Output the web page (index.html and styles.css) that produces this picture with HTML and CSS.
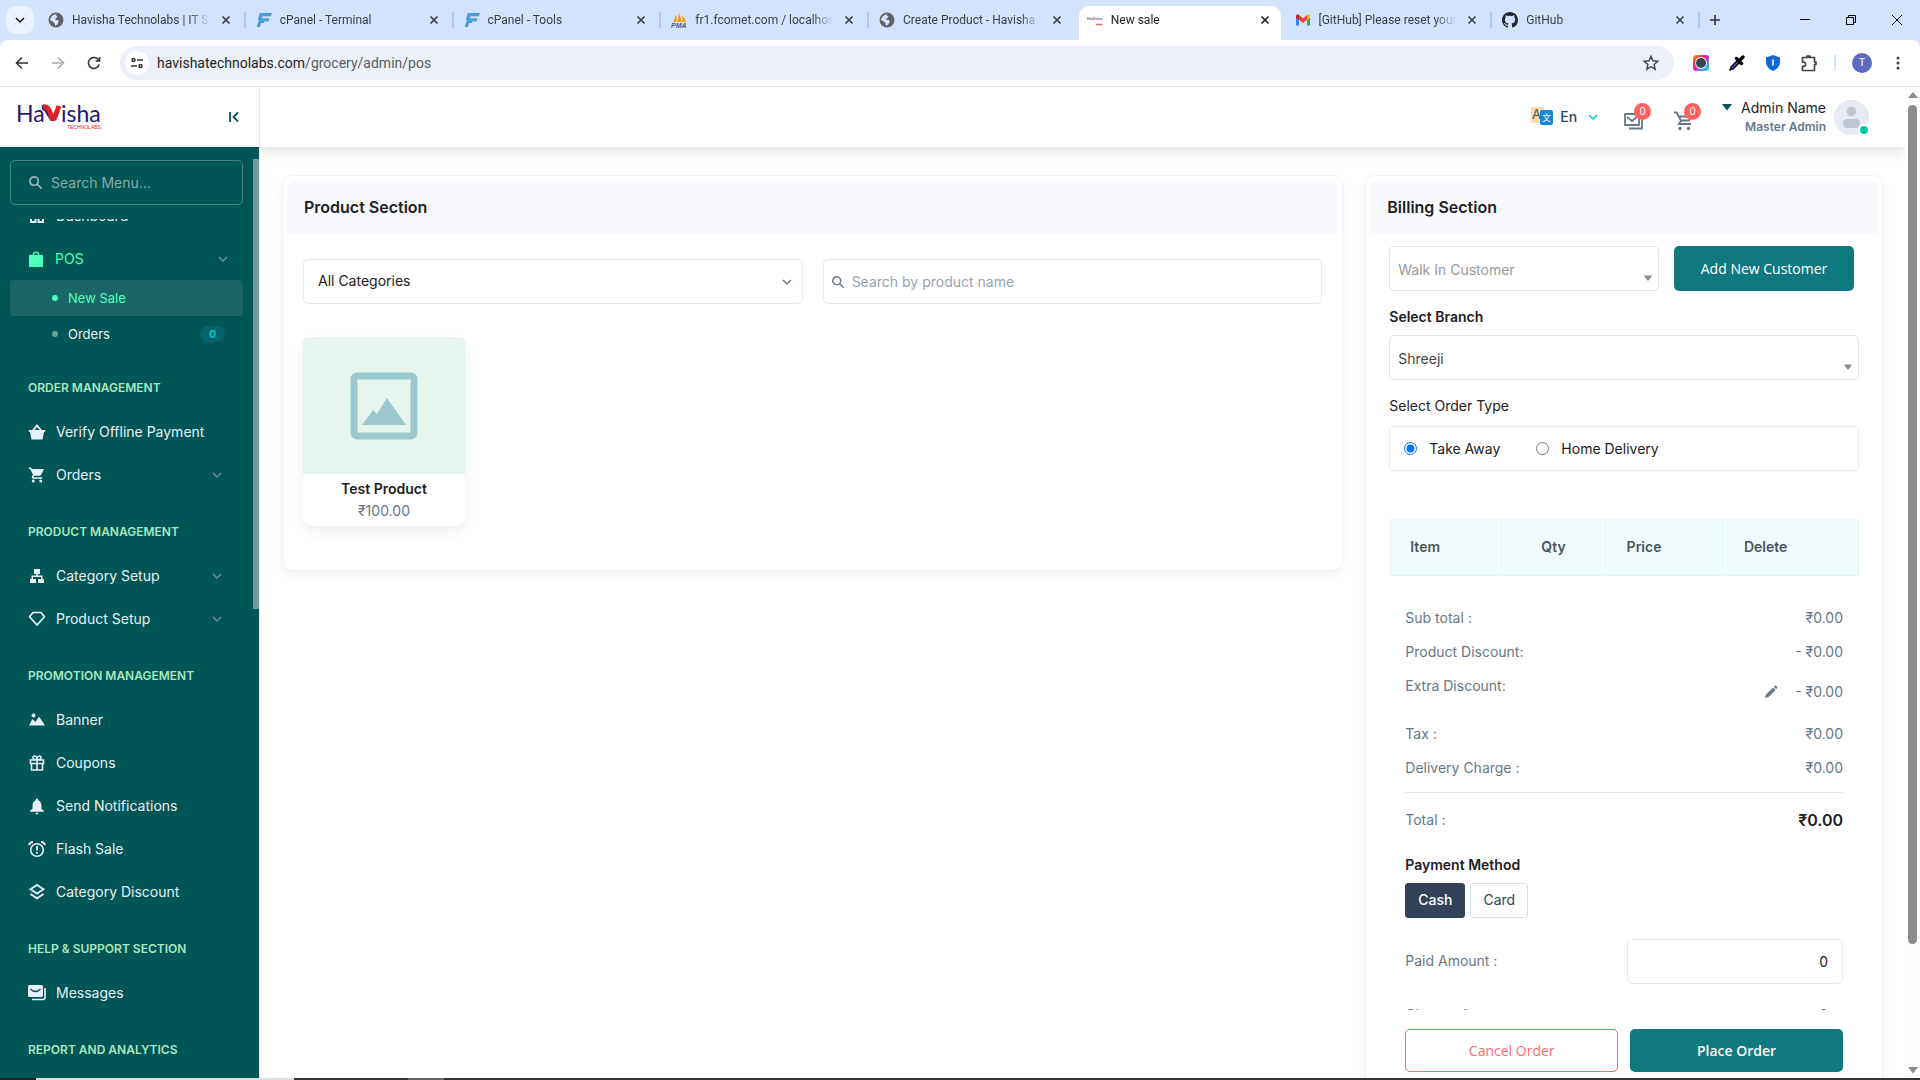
FILE: index.html
```html
<!DOCTYPE html>
<html lang="en">
<head>
<meta charset="utf-8">
<meta name="viewport" content="width=device-width, initial-scale=1">
<title>New sale</title>
<link rel="stylesheet" href="styles.css">
</head>
<body>
<svg class="defs" aria-hidden="true">
  <symbol id="close" viewBox="0 0 16 16"><path d="M4.500 4.500l7 7M11.500 4.500l-7 7" fill="none" stroke="currentColor" stroke-width="1.700"/></symbol>
  <symbol id="chev" viewBox="0 0 12 12"><path d="M2 4l4 4 4-4" fill="none" stroke="currentColor" stroke-width="1.500"/></symbol>
  <symbol id="tri" viewBox="0 0 12 12"><path d="M1 3h10L6 9.500z" fill="currentColor"/></symbol>
  <symbol id="search" viewBox="0 0 16 16"><path d="M10 10l4.500 4.500M11 6.500a4.500 4.500 0 1 1-9 0a4.500 4.500 0 0 1 9 0z" fill="none" stroke="currentColor" stroke-width="1.700"/></symbol>
  <symbol id="globe" viewBox="0 0 16 16"><circle cx="8" cy="8" r="7.500" fill="#5f6368"/><path d="M3 5.500c1-2 3-3.500 5.500-3.300-1 1-.5 1.800.8 2 .4 1.300-.8 1.600-1.800 2.300-.5 1 .3 1.500 1.700 1.600 1.300.2 1.600 1.300 1.200 2.300-.8 1.800-2 3-3.500 3.300.3-1.500-.2-2.400-1-3.200C4.700 9.300 3.600 8.600 2 8.200c0-1 .4-2 1-2.700z" fill="#d3e3fd"/></symbol>
  <symbol id="cpanel" viewBox="0 0 16 16"><path d="M4 1h12l-1.200 3.300H6.300L5.800 6.200h7.700l-1 3.200H8.200l-.5 1.600H5L3.800 15H.8L3 7.500H1.500z" fill="#4a9edb"/></symbol>
  <symbol id="bin" viewBox="0 0 24 24"><path d="M7 18a2 2 0 1 0 0 4 2 2 0 0 0 0-4zM1 2v2h2l3.600 7.590-1.350 2.450C4.500 15.400 5.500 17 7 17h12v-2H7.420l-.22-.37.900-1.630h7.450c.75 0 1.410-.41 1.750-1.030l3.580-6.490A1 1 0 0 0 20 4H5.210l-.94-2zM17 18a2 2 0 1 0 0 4 2 2 0 0 0 0-4z" fill="currentColor"/></symbol>
</svg>

<div class="browser">
  <div class="tabstrip">
    <button class="tab-search" aria-label="Search tabs"><svg width="12" height="12"><use href="#chev" stroke-width="2"/></svg></button>
    <div class="tabs">
      <div class="tab"><svg class="fav"><use href="#globe"/></svg><span class="tab-title">Havisha Technolabs | IT Solutions</span><button class="tab-close" aria-label="Close"><svg><use href="#close"/></svg></button></div>
      <div class="tab"><svg class="fav"><use href="#cpanel"/></svg><span class="tab-title">cPanel - Terminal</span><button class="tab-close" aria-label="Close"><svg><use href="#close"/></svg></button></div>
      <div class="tab"><svg class="fav"><use href="#cpanel"/></svg><span class="tab-title">cPanel - Tools</span><button class="tab-close" aria-label="Close"><svg><use href="#close"/></svg></button></div>
      <div class="tab"><svg class="fav" viewBox="0 0 16 16"><path d="M2 10Q4.500 6 5 2q1 4 .5 8zM6.500 10Q8 5 7.500 1q3 4 2.500 9zM10.800 10Q12 7 11 3q3.500 4 4 7z" fill="#f89c0e"/><text x="0" y="16" class="pma">PMA</text></svg><span class="tab-title">fr1.fcomet.com / localhost / grocery</span><button class="tab-close" aria-label="Close"><svg><use href="#close"/></svg></button></div>
      <div class="tab no-sep"><svg class="fav"><use href="#globe"/></svg><span class="tab-title">Create Product - Havisha Technolabs</span><button class="tab-close" aria-label="Close"><svg><use href="#close"/></svg></button></div>
      <div class="tab active"><svg class="fav" viewBox="0 0 16 16"><text x="0" y="8" class="fav-ha">Ha<tspan class="fav-v">V</tspan>isha</text><path d="M9 12.500h6" stroke="#e66" stroke-width="1.500"/></svg><span class="tab-title">New sale</span><button class="tab-close" aria-label="Close"><svg><use href="#close"/></svg></button></div>
      <div class="tab"><svg class="fav" viewBox="0 0 16 16"><path d="M1 3v10.500h3V7z" fill="#4285f4"/><path d="M15 3v10.500h-3V7z" fill="#34a853"/><path d="M1 3.500Q2.500 1.500 4 3v5L1 6z" fill="#c5221f"/><path d="M15 3.500Q13.500 1.500 12 3v5l3-2z" fill="#fbbc04"/><path d="M4 3l4 3.200L12 3v4.800L8 11 4 7.800z" fill="#ea4335"/></svg><span class="tab-title">[GitHub] Please reset your password</span><button class="tab-close" aria-label="Close"><svg><use href="#close"/></svg></button></div>
      <div class="tab"><svg class="fav" viewBox="0 0 16 16"><path fill="#24292f" d="M8 0C3.580 0 0 3.580 0 8c0 3.540 2.290 6.530 5.470 7.590.4.070.55-.17.55-.38 0-.19-.01-.82-.01-1.490-2.010.37-2.530-.49-2.690-.94-.09-.23-.48-.94-.82-1.130-.28-.15-.68-.52-.01-.53.630-.01 1.080.580 1.230.820.720 1.210 1.870.870 2.330.660.070-.52.280-.87.510-1.070-1.780-.2-3.640-.89-3.640-3.950 0-.87.310-1.590.820-2.150-.08-.2-.36-1.020.080-2.120 0 0 .67-.21 2.200.820a7.700 7.700 0 0 1 4 0c1.530-1.040 2.200-.82 2.200-.82.440 1.100.160 1.920.080 2.120.510.560.820 1.270.820 2.150 0 3.070-1.870 3.750-3.650 3.950.290.250.540.730.540 1.480 0 1.070-.01 1.930-.01 2.200 0 .21.150.460.550.380A8 8 0 0 0 16 8c0-4.420-3.580-8-8-8z"/></svg><span class="tab-title">GitHub</span><button class="tab-close" aria-label="Close"><svg><use href="#close"/></svg></button></div>
    </div>
    <button class="new-tab" aria-label="New tab"><svg width="14" height="14" viewBox="0 0 14 14"><path d="M7 2v10M2 7h10" stroke="#333" stroke-width="1.600"/></svg></button>
    <div class="win-buttons">
      <button aria-label="Minimize"><svg width="12" height="12" viewBox="0 0 12 12"><path d="M1 5.500h10" stroke="#000"/></svg></button>
      <button aria-label="Restore"><svg width="12" height="12" viewBox="0 0 12 12"><path d="M1.500 3.500h7v7h-7zM3.500 3V1.500h7v7H9" fill="none" stroke="#000"/></svg></button>
      <button aria-label="Close window"><svg width="12" height="12" viewBox="0 0 12 12"><path d="M1 1l10 10M11 1L1 11" stroke="#000"/></svg></button>
    </div>
  </div>

  <div class="toolbar">
    <button class="nav-btn" aria-label="Back"><svg width="16" height="16" viewBox="0 0 16 16"><path d="M8 2.500L2.500 8 8 13.500M2.500 8H14" fill="none" stroke="#333" stroke-width="1.600"/></svg></button>
    <button class="nav-btn" aria-label="Forward"><svg width="16" height="16" viewBox="0 0 16 16"><path d="M8 2.500L13.500 8 8 13.500M13.500 8H2" fill="none" stroke="#aaa" stroke-width="1.600"/></svg></button>
    <button class="nav-btn" aria-label="Reload"><svg width="16" height="16" viewBox="0 0 16 16"><path d="M13.200 9.500A5.500 5.500 0 1 1 12.500 5M13.500 2v4h-4" fill="none" stroke="#333" stroke-width="1.600"/></svg></button>
    <div class="omnibox">
      <button class="site-info" aria-label="Site information"><svg width="14" height="14" viewBox="0 0 14 14"><path d="M7 4h6M1 10h6M5 4a1.500 1.500 0 1 1-3 0 1.500 1.500 0 0 1 3 0zM12 10a1.500 1.500 0 1 1-3 0 1.500 1.500 0 0 1 3 0z" fill="none" stroke="#333" stroke-width="1.500"/></svg></button>
      <span class="url">havishatechnolabs.com<span class="path">/grocery/admin/pos</span></span>
      <button class="star" aria-label="Bookmark"><svg width="18" height="18" viewBox="0 0 18 18"><path d="M9 2.300l1.900 4.500 4.900.4-3.700 3.200 1.100 4.800L9 12.700l-4.200 2.500 1.100-4.800-3.700-3.200 4.900-.4z" fill="none" stroke="#444" stroke-width="1.400"/></svg></button>
    </div>
    <div class="extensions">
      <svg width="18" height="18" viewBox="0 0 18 18"><defs><linearGradient id="rb" x1="0" y1="0" x2="1" y2="1"><stop offset="0" stop-color="#f9a825"/><stop offset=".3" stop-color="#f33"/><stop offset=".5" stop-color="#e91ec4"/><stop offset=".7" stop-color="#5b8cf0"/><stop offset="1" stop-color="#1be0c8"/></linearGradient></defs><rect x="1" y="1" width="16" height="16" rx="3" fill="url(#rb)"/><circle cx="9" cy="9" r="6" fill="#fff"/><circle cx="9" cy="9" r="5" fill="#344450"/></svg>
      <svg width="18" height="18" viewBox="0 0 18 18"><path d="M1 17l1.500-4.500L9 6l3 3-6.500 6.500z" fill="#000"/><path d="M3.500 13.500L9 8l1 1-5.500 5.500z" fill="#4a5be0"/><path d="M8.500 4.500l5 5M11 7l4-4" stroke="#000" stroke-width="3.500" stroke-linecap="round"/></svg>
      <svg width="18" height="18" viewBox="0 0 18 18"><path d="M9 1l7 2.500V8c0 4-3 7.500-7 9-4-1.500-7-5-7-9V3.500z" fill="#1168d9"/><path d="M9 5.500v6" stroke="#fff" stroke-width="1.600"/></svg>
      <svg width="18" height="18" viewBox="0 0 18 18"><path d="M2.500 3.500h12V8h1.500v2.500h-1.500v6h-12v-4.200h1a2 2 0 0 0 0-4.200h-1zM7 3.500V2h3v1.500" fill="none" stroke="#444" stroke-width="1.700" stroke-linejoin="round"/></svg>
    </div>
    <span class="tool-sep"></span>
    <button class="profile" aria-label="Profile">T</button>
    <button class="more" aria-label="More"><svg width="4" height="16" viewBox="0 0 4 16"><circle cx="2" cy="3" r="1.500"/><circle cx="2" cy="8" r="1.500"/><circle cx="2" cy="13" r="1.500"/></svg></button>
  </div>
</div>

<div class="app">
  <aside class="sidebar">
    <div class="brand">
      <a href="#" aria-label="Havisha Technolabs"><svg width="90" height="30" viewBox="0 0 90 30"><text x="-1" y="20" class="logo-main">Ha</text><path d="M25 6q4-1 6 4l5 8" fill="none" stroke="#2a1470" stroke-width="5"/><path d="M26 5q5-1 7 6l2 5q2 2 3-1l4-11" fill="none" stroke="#dd1f26" stroke-width="5"/><text x="44" y="20" class="logo-main">isha</text><text x="50" y="27" class="logo-sub">TECHNOLABS</text></svg></a>
      <button aria-label="Collapse sidebar"><svg width="14" height="14" viewBox="0 0 14 14"><path d="M3 2v10M11 2.500L6.500 7l4.500 4.500" fill="none" stroke="#005555" stroke-width="1.800"/></svg></button>
    </div>
    <div class="side-body">
      <div class="side-main">
        <div class="side-search"><svg width="15" height="15"><use href="#search"/></svg><input type="text" placeholder="Search Menu..." aria-label="Search menu"></div>
        <nav class="side-nav">
          <ul>
            <li><a href="#"><svg viewBox="0 0 18 18"><path d="M3 3h4.500v4.500H3zM10.500 3H15v4.500h-4.500zM3 10.500h4.500V15H3zM10.500 10.500H15V15h-4.500z" fill="none" stroke="currentColor" stroke-width="2"/></svg>Dashboard</a></li>
            <li><a href="#" class="open"><svg viewBox="0 0 18 18"><path d="M2 5h3.500a3.500 3.500 0 0 1 7 0H16v12H2zM7 5h4a2 2 0 0 0-4 0z" fill="currentColor"/></svg>POS<svg class="arrow"><use href="#chev"/></svg></a></li>
            <li><a href="#" class="sub current"><span class="dot"></span>New Sale</a></li>
            <li><a href="#" class="sub"><span class="dot"></span>Orders<span class="count">0</span></a></li>
            <li class="title">Order Management</li>
            <li><a href="#"><svg viewBox="0 0 18 18"><path d="M.5 7h3.600L9 1l4.900 6h3.600l-.6 2H16l-1.500 7.500h-11L2 9h-.9zM6.500 7h5L9 4z" fill="currentColor"/></svg>Verify Offline Payment</a></li>
            <li><a href="#"><svg><use href="#bin"/></svg>Orders<svg class="arrow"><use href="#chev"/></svg></a></li>
            <li class="title">Product Management</li>
            <li><a href="#"><svg viewBox="0 0 18 18"><path d="M6 2h6v5H9.800v1.500h4.700V12H16v4h-6v-4h3v-2H5v2h3v4H2v-4h1.500V8.500h4.700V7H6z" fill="currentColor"/></svg>Category Setup<svg class="arrow"><use href="#chev"/></svg></a></li>
            <li><a href="#"><svg viewBox="0 0 18 18"><path d="M5 2.500h8l3.500 4.300L9 15 1.500 6.800z" fill="none" stroke="currentColor" stroke-width="1.700"/></svg>Product Setup<svg class="arrow"><use href="#chev"/></svg></a></li>
            <li class="title">Promotion Management</li>
            <li><a href="#"><svg viewBox="0 0 18 18"><path d="M1 14.500L4.500 8l3 3L11 5.500l6 9z" fill="currentColor"/><circle cx="5.500" cy="4.500" r="2" fill="currentColor"/></svg>Banner</a></li>
            <li><a href="#"><svg viewBox="0 0 18 18"><path d="M2.500 6h13v3.500h-13zM3.500 9.500h11V16h-11zM9 6v10M9 6C4 6 4 2 6.500 2 8 2 9 4 9 6c0-2 1-4 2.500-4C14 2 14 6 9 6z" fill="none" stroke="currentColor" stroke-width="1.600"/></svg>Coupons</a></li>
            <li><a href="#"><svg viewBox="0 0 24 24"><path d="M12 23c1.100 0 2-.9 2-2h-4c0 1.100.9 2 2 2zm6-7v-5c0-3.070-1.630-6.140-4.500-6.820V3.500a1.500 1.500 0 0 0-3 0v.68C7.640 4.860 6 7.920 6 11v5l-3 2v1.500h18V18z" fill="currentColor"/></svg>Send Notifications</a></li>
            <li><a href="#"><svg viewBox="0 0 18 18"><circle cx="9" cy="10" r="6.300" fill="none" stroke="currentColor" stroke-width="1.600"/><path d="M9 6v4.500M9 12v1.800" stroke="currentColor" stroke-width="1.800"/><path d="M1 5q1-3 4-3M17 5q-1-3-4-3" fill="none" stroke="currentColor" stroke-width="2"/></svg>Flash Sale</a></li>
            <li><a href="#"><svg viewBox="0 0 18 18"><path d="M9 2l6.500 4.300L9 10.600 2.500 6.300zM2.500 11L9 15.300 15.500 11" fill="none" stroke="currentColor" stroke-width="1.900"/></svg>Category Discount</a></li>
            <li class="title">Help &amp; Support Section</li>
            <li><a href="#"><svg viewBox="0 0 18 18"><rect x="0" y="1" width="15" height="12" rx="1.500" fill="currentColor"/><path d="M2.500 5Q7.500 10 12.500 5" fill="none" stroke="#005555" stroke-width="1.300"/><path d="M17 4v9.500a2 2 0 0 1-2 2H4" fill="none" stroke="currentColor" stroke-width="1.600"/></svg>Messages</a></li>
            <li class="title">Report and Analytics</li>
          </ul>
        </nav>
      </div>
      <div class="side-scroll"><span></span></div>
    </div>
  </aside>

  <div class="page">
    <header class="topbar">
      <button class="lang">
        <svg width="24" height="20" viewBox="0 0 24 20"><rect x="1" y="0" width="13" height="16" rx="2" fill="#fbdca8"/><text x="2" y="12" class="lang-a">A</text><rect x="10" y="3" width="13" height="15" rx="2" fill="#1488dc"/><text x="12" y="14" class="lang-b">文</text></svg>
        En<svg class="lang-chev" width="12" height="12"><use href="#chev"/></svg>
      </button>
      <div class="bells">
        <button class="bell" aria-label="Messages"><svg width="22" height="20" viewBox="0 0 22 20"><path d="M2 3h14v11H2zM4 6l5 4 5-4M19 6v11.500H6" fill="none" stroke="currentColor" stroke-width="1.800" stroke-linejoin="round"/></svg><span>0</span></button>
        <button class="bell" aria-label="Cart"><svg width="22" height="20" viewBox="0 0 22 20"><path d="M1 1.500h2.500L8 9.500h8l1-2M8 9.500l-2 3.500h12M6 5.500h8" fill="none" stroke="currentColor" stroke-width="1.800"/><circle cx="7" cy="17.500" r="1.700" fill="currentColor"/><circle cx="15.500" cy="17.500" r="1.700" fill="currentColor"/></svg><span>0</span></button>
      </div>
      <button class="account">
        <svg class="caret" width="12" height="12"><use href="#tri"/></svg>
        <span class="who"><span class="name">Admin Name</span><span class="role">Master Admin</span></span>
        <span class="avatar"><svg width="35" height="35" viewBox="0 0 35 35"><circle cx="17.500" cy="17.500" r="17.500" fill="#e7eaf3"/><circle cx="17.500" cy="11.500" r="4.800" fill="#bdc5d1"/><rect x="9" y="19" width="17" height="9" rx="4.500" fill="#bdc5d1"/></svg><span class="online"></span></span>
      </button>
    </header>

    <main class="content">
      <section class="card products">
        <h2 class="card-head">Product Section</h2>
        <div class="products-body">
          <div class="filters">
            <div class="pick"><select class="field cat" aria-label="Category"><option>All Categories</option></select><svg class="chev" width="12" height="12"><use href="#chev"/></svg></div>
            <div class="field find"><svg width="14" height="14"><use href="#search"/></svg><input type="search" placeholder="Search by product name" aria-label="Search by product name"></div>
          </div>
          <a href="#" class="product">
            <span class="thumb"><svg width="68" height="68" viewBox="0 0 68 68"><rect x="4" y="4" width="60" height="60" rx="3" fill="none" stroke="#9ac8cc" stroke-width="7"/><path d="M12 53l11-15 4 4L37 26l19 27z" fill="#9ac8cc"/></svg></span>
            <span class="p-name">Test Product</span>
            <span class="p-price">₹100.00</span>
          </a>
        </div>
      </section>

      <section class="card billing">
        <h2 class="card-head">Billing Section</h2>
        <div class="bill-scroll">
          <div class="customer">
            <div class="pick low"><select class="field muted" aria-label="Customer"><option>Walk In Customer</option></select><svg width="10" height="10"><use href="#tri"/></svg></div>
            <button class="btn primary">Add New Customer</button>
          </div>
          <label class="lbl strong" for="branch">Select Branch</label>
          <div class="pick low"><select id="branch" class="field"><option>Shreeji</option></select><svg width="10" height="10"><use href="#tri"/></svg></div>
          <div class="lbl" id="otype">Select Order Type</div>
          <div class="field radios" role="radiogroup" aria-labelledby="otype">
            <label><input type="radio" name="otype" checked>Take Away</label>
            <label><input type="radio" name="otype">Home Delivery</label>
          </div>
          <table class="items">
            <thead><tr><th class="w-item">Item</th><th class="w-qty">Qty</th><th class="w-price">Price</th><th>Delete</th></tr></thead>
          </table>
          <div class="summary">
            <div class="line"><span>Sub total :</span><span>₹0.00</span></div>
            <div class="line"><span>Product Discount:</span><span>- ₹0.00</span></div>
            <div class="line extra"><span>Extra Discount:</span><span class="val"><button aria-label="Edit extra discount"><svg width="14" height="14" viewBox="0 0 14 14"><path d="M1 13l1-3.500 7-7L11.500 5l-7 7zM9.800 1.800l1-1q.8-.5 1.500.3l.7.700q.6.700 0 1.400l-1 1z" fill="#677788"/></svg></button>- ₹0.00</span></div>
            <div class="line"><span>Tax :</span><span>₹0.00</span></div>
            <div class="line"><span>Delivery Charge :</span><span>₹0.00</span></div>
            <hr>
            <div class="line"><span>Total :</span><span class="total">₹0.00</span></div>
            <div class="pay-title">Payment Method</div>
            <div class="pay"><button class="on">Cash</button><button>Card</button></div>
            <div class="line paid"><label for="paid">Paid Amount :</label><input id="paid" class="field" type="text" value="0"></div>
            <div class="line change"><span>Change Amount :</span><span class="due">0</span></div>
          </div>
        </div>
        <div class="bill-actions">
          <button class="btn danger">Cancel Order</button>
          <button class="btn primary">Place Order</button>
        </div>
      </section>
    </main>
  </div>

  <div class="scrollbar">
    <svg width="12" height="12" viewBox="0 0 12 12"><path d="M1 9h10L6 3z" fill="#8b8b8b"/></svg>
    <span class="thumb-v"></span>
    <svg class="down" width="12" height="12"><use href="#tri"/></svg>
  </div>
</div>
<div class="taskbar"></div>
</body>
</html>
```
FILE: styles.css
```css
* { box-sizing: border-box; }
body {
  margin: 0;
  height: 100vh;
  display: flex;
  flex-direction: column;
  overflow: hidden;
  background: #fff;
  color: #1e2022;
  font: 14px/20px Inter, sans-serif;
}
button { font: inherit; color: inherit; background: none; border: 0; padding: 0; display: flex; align-items: center; justify-content: center; }
input, select { font: inherit; color: inherit; margin: 0; min-width: 0; }
a { color: inherit; text-decoration: none; }
ul { list-style: none; margin: 0; padding: 0; }
svg { flex: none; display: block; }
.defs { display: none; }

/* Browser chrome */
.browser { flex: none; background: #d3e3fd; font-family: Roboto, sans-serif; border-bottom: 1px solid #dfe1e5; }
.tabstrip { height: 40px; display: flex; align-items: stretch; }
.tab-search { width: 28px; height: 28px; margin: 6px 4px 0 6px; border-radius: 10px; background: #ebf1fe; color: #111; }
.tabs { flex: 1; display: flex; min-width: 0; }
.tab {
  flex: 1; min-width: 0; display: flex; align-items: center; position: relative;
  padding: 0 12px 0 10px; font-size: 12px; color: #3c4043;
}
.tab::after { content: ""; position: absolute; right: 0; top: 12px; width: 2px; height: 16px; background: #a8c7fa; }
.tab.no-sep::after, .tab.active::after { display: none; }
.tab.active { color: #1f1f1f; }
.tab.active::before {
  content: ""; position: absolute; inset: 6px 4px 0 2px; background: #fff; border-radius: 10px 10px 0 0;
}
.tab > * { position: relative; }
.fav { width: 16px; height: 16px; margin-right: 8px; }
.tab-title {
  flex: 1; overflow: hidden; white-space: nowrap; margin-right: 8px;
  -webkit-mask-image: linear-gradient(to right, #000 85%, transparent);
  mask-image: linear-gradient(to right, #000 85%, transparent);
}
.tab-close svg { width: 16px; height: 16px; }
.pma { font: italic bold 7px "Liberation Sans", sans-serif; fill: #4b5a8a; }
.fav-ha { font: 4px "Liberation Sans", sans-serif; fill: #2a1470; }
.fav-v { fill: #d8202a; font-weight: bold; }
.new-tab { width: 30px; }
.win-buttons { display: flex; margin-left: 52px; }
.win-buttons button { width: 46px; }
.toolbar { height: 46px; display: flex; align-items: center; background: #fff; border-radius: 8px 8px 0 0; padding: 0 14px 0 4px; }
.nav-btn { width: 36px; height: 34px; }
.omnibox { flex: 1; height: 34px; margin-left: 8px; padding: 0 14px 0 5px; border-radius: 17px; background: #ecf0fa; display: flex; align-items: center; }
.site-info { width: 24px; height: 24px; border-radius: 50%; background: #fff; margin-right: 8px; }
.url { flex: 1; font-size: 14px; color: #1f1f1f; }
.path { color: #5a5d61; }
.extensions { display: flex; gap: 18px; margin-left: 18px; }
.tool-sep { width: 2px; height: 16px; background: #d3e3fd; margin: 0 16px; }
.profile { width: 20px; height: 20px; border-radius: 50%; background: #5c6bc0; color: #fff; font-size: 11px; }
.more { width: 16px; margin-left: 18px; fill: #444; }

/* Application shell */
.app { flex: 1; min-height: 0; display: flex; }
.sidebar { flex: none; width: 260px; display: flex; flex-direction: column; border-right: 1px solid #e7eaf3; }
.brand { flex: none; height: 60px; display: flex; align-items: center; justify-content: space-between; padding: 0 18px 0 17px; }
.logo-main { font: 400 23px Lato, sans-serif; fill: #2a1470; }
.logo-sub { font: 5px "Liberation Sans", sans-serif; fill: #dd1f26; }
.side-body { flex: 1; min-height: 0; display: flex; background: #005555; color: #e7f0fa; }
.side-main { flex: 1; min-width: 0; display: flex; flex-direction: column; padding-top: 13px; }
.side-search {
  flex: none; height: 45px; margin: 0 10px 14px; padding: 0 17px; display: flex; align-items: center; gap: 8px;
  border: 1px solid #4a8585; border-radius: 5px; color: #9dbcbc;
}
.side-search input { flex: 1; border: 0; background: none; padding: 0; color: #fff; outline: 0; }
.side-search input::placeholder { color: #8aabab; opacity: 1; }
.side-nav { flex: 1; min-height: 0; overflow: hidden; display: flex; }
.side-nav ul { flex: 1; margin-top: -25px; }
.side-nav li a { display: flex; align-items: center; height: 43px; padding: 0 30px 0 28px; }
.side-nav a > svg:first-child { width: 18px; height: 18px; margin-right: 10px; }
.side-nav a .arrow { width: 12px; height: 12px; margin-left: auto; color: #6d93a0; }
.side-nav a.open { color: #4dffb8; padding: 0 24px 0 27px; }
.side-nav a.sub { height: 36px; margin: 0 10px; padding: 0 18px 0 42px; border-radius: 4px; font-size: 13px; }
.side-nav a.sub.current { background: #1a6666; color: #4dffb8; }
.dot { width: 6px; height: 6px; border-radius: 50%; background: #66a399; margin-right: 10px; }
.current .dot { background: #4dffb8; }
.count { margin-left: auto; width: 25px; height: 16px; border-radius: 8px; background: #05646a; color: #00c9db; font-size: 10px; line-height: 16px; font-weight: 700; text-align: center; }
.title { height: 58px; padding: 28px 28px 0; font-size: 12px; line-height: 16px; font-weight: 600; text-transform: uppercase; color: #a8e6c0; }
.side-scroll { flex: none; width: 6px; padding-top: 12px; display: flex; flex-direction: column; }
.side-scroll span { height: 49%; background: #76999c; }

/* Top bar */
.page { flex: 1; min-width: 0; display: flex; flex-direction: column; }
.topbar { flex: none; height: 60px; display: flex; align-items: center; justify-content: flex-end; padding-right: 36px; box-shadow: 0 6px 12px rgba(140, 152, 164, .25); clip-path: inset(0 0 -24px 0); z-index: 1; }
.lang { gap: 6px; font-weight: 500; color: #334257; margin-right: 24px; }
.lang-chev { margin-left: 4px; color: #00c9db; }
.lang-a { font: 13px Inter, sans-serif; fill: #44546a; }
.lang-b { font: 9px "Noto Sans CJK SC", sans-serif; fill: #fff; }
.bells { display: flex; gap: 28px; margin-right: 26px; }
.bell { position: relative; width: 22px; height: 40px; padding-top: 8px; color: #677788; }
.bell span { position: absolute; left: 11px; top: 6px; width: 17px; height: 17px; border-radius: 50%; background: #ff6161; color: #fff; font-size: 10px; line-height: 17px; }
.account { gap: 8px; }
.caret { color: #005555; margin-bottom: 20px; }
.who { display: flex; flex-direction: column; text-align: right; }
.role { font-size: 12px; line-height: 18px; font-weight: 600; color: #677788; }
.avatar { position: relative; }
.online { position: absolute; right: -1px; bottom: -1px; width: 12px; height: 12px; border: 2px solid #fff; border-radius: 50%; background: #00c9a7; }

/* Cards */
.content { flex: 1; min-height: 0; display: grid; grid-template-columns: 41fr 20fr; gap: 22px; padding: 28px 22px 0; }
.card { border: 1px solid #f1f2f5; border-radius: 10px; padding: 4px; box-shadow: 0 6px 12px rgba(140, 152, 164, .08); min-width: 0; }
.card-head { flex: none; margin: 0; height: 54px; padding: 0 17px; border-radius: 8px 8px 0 0; background: #f8fafd; font-size: 16px; line-height: 54px; font-weight: 600; }
.field { display: flex; align-items: center; width: 100%; height: 45px; border: 1px solid #e7eaf3; border-radius: 5px; background: #fff; outline: 0; }
.pick { display: grid; align-items: center; }
.pick > * { grid-area: 1 / 1; }
.pick > svg { justify-self: end; pointer-events: none; }
.pick select { appearance: none; }
.products { align-self: start; }
.products-body { padding: 25px 16px 40px; }
.filters { display: grid; grid-template-columns: 1fr 1fr; gap: 20px; margin-bottom: 33px; }
.cat { padding: 0 14px 2px; }
.pick .chev { margin-right: 10px; color: #677788; }
.find { gap: 7px; padding: 0 7px; color: #677788; }
.find input { flex: 1; border: 0; padding: 0; outline: 0; }
.find input::placeholder { color: #97a4af; opacity: 1; }
.product { width: 162px; display: flex; flex-direction: column; text-align: center; padding-bottom: 4px; border-radius: 10px; box-shadow: 0 6px 12px rgba(140, 152, 164, .15); }
.thumb { height: 137px; display: flex; align-items: center; justify-content: center; background: #e5f5ed; border-radius: 5px 5px 0 0; }
.p-name { margin-top: 4px; line-height: 22px; font-weight: 600; }
.p-price { line-height: 22px; color: #677788; }

/* Billing */
.billing { display: flex; flex-direction: column; min-height: 0; border-bottom: 0; border-radius: 10px 10px 0 0; padding-bottom: 0; }
.bill-scroll { flex: 1; min-height: 0; overflow: hidden; padding: 12px 19px 0; }
.customer { display: grid; grid-template-columns: 3fr 2fr; gap: 15px; padding-right: 5px; }
.pick.low > svg { align-self: end; margin: 0 6px 8px 0; color: #888; }
.pick.low select { padding: 2px 8px 0; color: #444; border-color: #e2e4ea; }
.pick.low select.muted { color: #999; }
.btn { font: 14px/20px "Open Sans", sans-serif; font-weight: 500; border-radius: 5px; height: 45px; }
.primary { background: #107980; color: #fff; }
.danger { border: 1px solid #ff6b6b; color: #ff6b6b; }
.lbl { display: block; line-height: 20px; margin: 16px 0 8px; }
.lbl.strong { font-weight: 600; }
.radios { gap: 36px; padding: 0 14px; margin-top: 10px; }
.radios label { display: flex; align-items: center; gap: 12px; }
.radios input { width: 13px; height: 13px; }
.items { width: 100%; margin-top: 48px; border-collapse: collapse; table-layout: fixed; }
.items th { height: 56px; padding: 0 21px; text-align: left; font-weight: 600; color: #4a5560; background: #f0fbfd; border-right: 1px solid #e1f7fa; border-bottom: 1px solid #e1f7fa; }
.items .w-item { width: 24%; }
.items .w-qty { width: 22%; text-align: center; }
.items .w-price { width: 25%; }
.summary { padding: 25px 16px 0; }
.line { display: flex; justify-content: space-between; min-height: 34px; line-height: 34px; color: #677788; }
.extra { height: 48px; }
.val { display: flex; align-items: center; gap: 17px; height: 46px; }
.summary hr { margin: 7px 0 10px; border: 0; border-top: 1px solid #e7eaf3; }
.total { font-size: 16px; font-weight: 600; color: #1e2022; }
.pay-title { margin-top: 18px; font-weight: 600; }
.pay { display: flex; gap: 5px; margin: 8px 0 21px; }
.pay button { height: 35px; padding: 0 12px; border: 1px solid #d5deea; border-radius: 3px; color: #334257; }
.pay .on { background: #334257; border-color: #334257; color: #fff; font-weight: 500; }
.paid { align-items: center; }
.paid .field { width: 216px; text-align: right; padding: 0 14px; color: #1e2022; }
.change { margin-top: 14px; }
.due { padding-right: 15px; }
.bill-actions { flex: none; display: grid; grid-template-columns: 1fr 1fr; gap: 12px; padding: 19px 35px 6px; }
.bill-actions .btn { height: 43px; font-weight: 600; }
.bill-actions .danger { font-weight: 500; }

/* Page scrollbar */
.scrollbar { flex: none; width: 15px; display: flex; flex-direction: column; align-items: center; background: #fcfcfc; padding: 2px 0; }
.thumb-v { width: 9px; height: 85%; margin: 4px 0 auto; border-radius: 5px; background: #8b8b8b; }
.down { color: #8b8b8b; }
.taskbar { flex: none; height: 2px; background: linear-gradient(to right, #222 0 36px, #ddd 36px 294px, #333 294px 408px, #666 408px 444px, #333 444px); }
```
